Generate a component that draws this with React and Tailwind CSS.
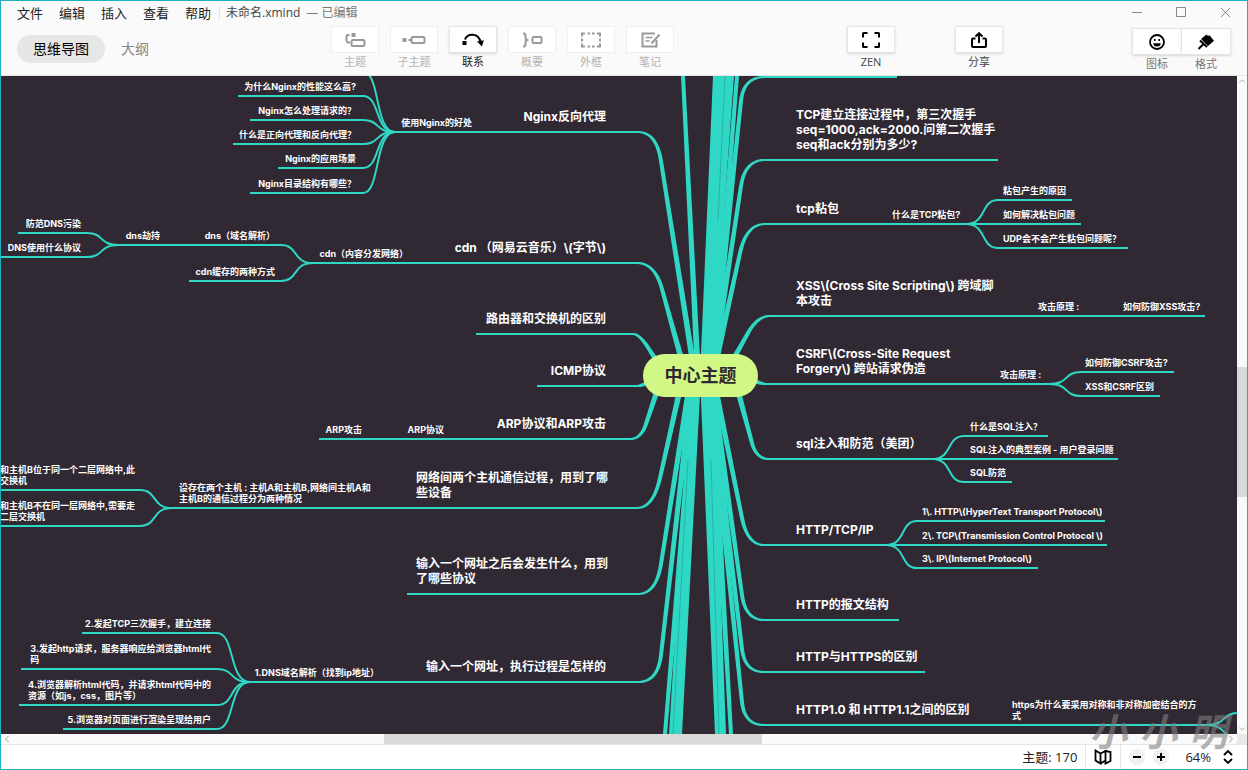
import { ChevronDown, ChevronLeft, ChevronRight, ChevronUp } from "lucide-react";

const TEAL = "#2fd8c5";

// scroll position of the canvas inside the map
const VIEW = { x: 1, y: 76 };
const CENTER_Y = 376;

// from: start x on the centre line, knee: where the line bends, flat: where it turns level
const branches = [
  { from: 695, knee: [661, 161], flat: 638, y: 132, end: 393 },
  { from: 686, knee: [662, 289], flat: 637, y: 263, end: 311 },
  { from: 666, knee: [649, 349], flat: 633, y: 334, end: 476 },
  { from: 664, knee: [645, 384], flat: 637, y: 386, end: 537 },
  { from: 662, knee: [646, 424], flat: 630, y: 439, end: 319 },
  { from: 683, knee: [660, 478], flat: 637, y: 508, end: 170 },
  { from: 691, knee: [661, 564], flat: 638, y: 594, end: 407 },
  { from: 693, knee: [661, 655], flat: 638, y: 682, end: 249 },
  { from: 712, knee: [741, 101], flat: 765, y: 77, end: 897 },
  { from: 712, knee: [741, 186], flat: 765, y: 160, end: 998 },
  { from: 713, knee: [740, 253], flat: 765, y: 224, end: 1081 },
  { from: 724, knee: [748, 333], flat: 770, y: 316, end: 1205 },
  { from: 738, knee: [757, 382], flat: 766, y: 384, end: 1049 },
  { from: 734, knee: [752, 443], flat: 769, y: 459, end: 1118 },
  { from: 713, knee: [742, 518], flat: 764, y: 545, end: 1107 },
  { from: 711, knee: [742, 595], flat: 764, y: 620, end: 899 },
  { from: 709, knee: [742, 649], flat: 764, y: 672, end: 925 },
  { from: 708, knee: [742, 702], flat: 764, y: 725, end: 1210 },
];

// branches that run to topics outside the window
const bundles = [
  "681,76 685,76 701,376 695,376",
  "713,76 734,76 712,376 700,376",
  "735,76 739,76 716,376 710,376",
  "663,734 667,734 698,376 692,376",
  "669,734 682,734 701,376 691,376",
  "715,734 726,734 713,376 700,376",
  "729,734 733,734 714,376 707,376",
];

const forks = [
  { x: 395, y: 132, to: 363, ys: [72, 96, 120, 144, 168, 193] },
  { x: 313, y: 263, to: 281, ys: [245, 281] },
  { x: 119, y: 245, to: 87, ys: [233, 257] },
  { x: 172, y: 508, to: 140, ys: [490, 526] },
  { x: 250, y: 682, to: 217, ys: [633, 669, 705, 729] },
  { x: 966, y: 224, to: 998, ys: [200, 248] },
  { x: 1049, y: 384, to: 1081, ys: [372, 396] },
  { x: 932, y: 459, to: 964, ys: [436, 482] },
  { x: 886, y: 545, to: 917, ys: [521, 568] },
  { x: 1206, y: 725, to: 1239, ys: [713, 738] },
];

// [x1, x2, y]
const rules = [
  [238, 363, 96],
  [250, 363, 120],
  [233, 363, 144],
  [278, 363, 168],
  [250, 363, 193],
  [115, 281, 245],
  [189, 281, 281],
  [18, 87, 233],
  [0, 87, 257],
  [0, 140, 490],
  [0, 140, 526],
  [82, 217, 633],
  [21, 217, 669],
  [19, 217, 705],
  [63, 217, 729],
  [998, 1072, 200],
  [998, 1128, 248],
  [1081, 1174, 372],
  [1081, 1160, 396],
  [964, 1048, 436],
  [964, 1012, 482],
  [917, 1105, 521],
  [917, 1038, 568],
];

// x is the left edge of the text, or the right edge when side is "left"
const mainTopics = [
  { side: "left", x: 606, y: 132, lines: ["Nginx反向代理"] },
  { side: "left", x: 606, y: 263, lines: ["cdn （网易云音乐）\\(字节\\)"] },
  { side: "left", x: 606, y: 334, lines: ["路由器和交换机的区别"] },
  { side: "left", x: 606, y: 386, lines: ["ICMP协议"] },
  { side: "left", x: 606, y: 439, lines: ["ARP协议和ARP攻击"] },
  { side: "left", x: 608, y: 508, lines: ["网络间两个主机通信过程，用到了哪", "些设备"] },
  { side: "left", x: 608, y: 594, lines: ["输入一个网址之后会发生什么，用到", "了哪些协议"] },
  { side: "left", x: 606, y: 682, lines: ["输入一个网址，执行过程是怎样的"] },
  { x: 796, y: 160, lines: ["TCP建立连接过程中，第三次握手", "seq=1000,ack=2000.问第二次握手", "seq和ack分别为多少?"] },
  { x: 796, y: 224, lines: ["tcp粘包"] },
  { x: 796, y: 316, lines: ["XSS\\(Cross Site Scripting\\) 跨域脚", "本攻击"] },
  { x: 796, y: 384, lines: ["CSRF\\(Cross-Site Request", "Forgery\\) 跨站请求伪造"] },
  { x: 796, y: 459, lines: ["sql注入和防范（美团）"] },
  { x: 796, y: 545, lines: ["HTTP/TCP/IP"] },
  { x: 796, y: 620, lines: ["HTTP的报文结构"] },
  { x: 796, y: 672, lines: ["HTTP与HTTPS的区别"] },
  { x: 796, y: 725, lines: ["HTTP1.0 和 HTTP1.1之间的区别"] },
];

const subTopics = [
  { side: "left", x: 472, y: 132, lines: ["使用Nginx的好处"] },
  { side: "left", x: 356, y: 96, lines: ["为什么Nginx的性能这么高?"] },
  { side: "left", x: 356, y: 120, lines: ["Nginx怎么处理请求的？"] },
  { side: "left", x: 356, y: 144, lines: ["什么是正向代理和反向代理？"] },
  { side: "left", x: 356, y: 168, lines: ["Nginx的应用场景"] },
  { side: "left", x: 356, y: 193, lines: ["Nginx目录结构有哪些？"] },
  { side: "left", x: 408, y: 263, lines: ["cdn（内容分发网络）"] },
  { side: "left", x: 275, y: 245, lines: ["dns（域名解析）"] },
  { side: "left", x: 275, y: 281, lines: ["cdn缓存的两种方式"] },
  { side: "left", x: 160, y: 245, lines: ["dns劫持"] },
  { side: "left", x: 81, y: 233, lines: ["防范DNS污染"] },
  { side: "left", x: 81, y: 257, lines: ["DNS使用什么协议"] },
  { side: "left", x: 444, y: 439, lines: ["ARP协议"] },
  { side: "left", x: 362, y: 439, lines: ["ARP攻击"] },
  { x: 179, y: 508, lines: ["设存在两个主机 : 主机A和主机B,网络间主机A和", "主机B的通信过程分为两种情况"] },
  { x: 0, y: 490, lines: ["和主机B位于同一个二层网络中,此", "交换机"] },
  { x: 0, y: 526, lines: ["和主机B不在同一层网络中,需要走", "二层交换机"] },
  { side: "left", x: 379, y: 682, lines: ["1.DNS域名解析（找到ip地址）"] },
  { side: "left", x: 211, y: 633, lines: ["2.发起TCP三次握手，建立连接"] },
  { side: "left", x: 211, y: 669, lines: ["3.发起http请求，服务器响应给浏览器html代", "码"] },
  { side: "left", x: 211, y: 705, lines: ["4.浏览器解析html代码，并请求html代码中的", "资源（如js，css，图片等）"] },
  { side: "left", x: 211, y: 729, lines: ["5.浏览器对页面进行渲染呈现给用户"] },
  { x: 892, y: 224, lines: ["什么是TCP粘包?"] },
  { x: 1003, y: 200, lines: ["粘包产生的原因"] },
  { x: 1003, y: 224, lines: ["如何解决粘包问题"] },
  { x: 1003, y: 248, lines: ["UDP会不会产生粘包问题呢？"] },
  { x: 1038, y: 316, lines: ["攻击原理 :"] },
  { x: 1123, y: 316, lines: ["如何防御XSS攻击?"] },
  { x: 1000, y: 384, lines: ["攻击原理 :"] },
  { x: 1085, y: 372, lines: ["如何防御CSRF攻击?"] },
  { x: 1085, y: 396, lines: ["XSS和CSRF区别"] },
  { x: 970, y: 436, lines: ["什么是SQL注入？"] },
  { x: 970, y: 459, lines: ["SQL注入的典型案例 - 用户登录问题"] },
  { x: 970, y: 482, lines: ["SQL防范"] },
  { x: 922, y: 521, lines: ["1\\. HTTP\\(HyperText Transport Protocol\\)"] },
  { x: 922, y: 545, lines: ["2\\. TCP\\(Transmission Control Protocol \\)"] },
  { x: 922, y: 568, lines: ["3\\. IP\\(Internet Protocol\\)"] },
  { x: 1012, y: 725, lines: ["https为什么要采用对称和非对称加密结合的方", "式"] },
];

// outline of a branch that gets thinner on its way out
function branchShape({ from, knee, flat, y }) {
  const [kx, ky] = knee;
  const dx = kx - from;
  const dy = ky - CENTER_Y;
  // the straight part, prolonged to the level of the topic
  let cx = dy === 0 ? kx : kx + (dx * (y - ky)) / dy;
  if ((cx - kx) / (flat - kx) > 0.8) cx = (kx + flat) / 2;
  const points = [];
  for (let i = 0; i <= 4; i++) {
    points.push([from + (dx * i) / 4, CENTER_Y + (dy * i) / 4, 3 - i * 0.25]);
  }
  for (let i = 1; i <= 12; i++) {
    const t = i / 12;
    const u = 1 - t;
    points.push([
      u * u * kx + 2 * u * t * cx + t * t * flat,
      u * u * ky + 2 * u * t * y + t * t * y,
      2 - t,
    ]);
  }
  const a = [];
  const b = [];
  points.forEach(([px, py, w], i) => {
    const p = points[Math.max(i - 1, 0)];
    const n = points[Math.min(i + 1, points.length - 1)];
    const len = Math.hypot(n[0] - p[0], n[1] - p[1]) || 1;
    const ox = (-(n[1] - p[1]) / len) * w;
    const oy = ((n[0] - p[0]) / len) * w;
    a.push(`${px + ox},${py + oy}`);
    b.unshift(`${px - ox},${py - oy}`);
  });
  return a.concat(b).join(" ");
}

function Lines() {
  return (
    <svg className="absolute inset-0 h-full w-full" aria-hidden="true">
      <g transform={`translate(${-VIEW.x} ${-VIEW.y})`} fill="none" stroke={TEAL} strokeWidth="2">
        {bundles.map((points) => (
          <polygon key={points} points={points} fill={TEAL} stroke="none" />
        ))}
        <g stroke="#1f8f87" strokeWidth="0.5">
          <path d="M725 76 718 220M673 734 688 460M719 734 711 460" />
        </g>
        {branches.map((b) => (
          <g key={`${b.end}-${b.y}`}>
            <polygon points={branchShape(b)} fill={TEAL} stroke="none" />
            <path d={`M${b.flat} ${b.y}H${b.end}`} />
          </g>
        ))}
        {forks.map((f) =>
          f.ys.map((y) => {
            const w = f.to - f.x;
            return (
              <path
                key={`${f.x}-${y}`}
                d={`M${f.x} ${f.y}C${f.x + w * 0.65} ${f.y} ${f.x + w * 0.45} ${y} ${f.to} ${y}`}
              />
            );
          })
        )}
        {rules.map(([x1, x2, y]) => (
          <path key={`${x1}-${y}`} d={`M${x1} ${y}H${x2}`} />
        ))}
      </g>
    </svg>
  );
}

function Topic({ topic, main }) {
  const left = topic.side === "left";
  const leading = main ? 15 : 11;
  const gap = main ? 8 : 4;
  const style = {
    left: topic.x - VIEW.x - (left ? 300 : 0),
    top: topic.y - VIEW.y - gap - leading * topic.lines.length,
  };
  return (
    <div className={`absolute flex w-[300px] ${left ? "justify-end" : "justify-start"}`} style={style}>
      <p
        className={`whitespace-nowrap font-bold text-white ${
          main ? "text-[12px] leading-[15px]" : "text-[9px] leading-[11px]"
        }`}
      >
        {topic.lines.map((line) => (
          <span key={line} className="block">
            {line}
          </span>
        ))}
      </p>
    </div>
  );
}

const icons = {
  topic: (
    <g fill="none" stroke="currentColor" strokeWidth="2">
      <path d="M6.5 3H5Q3.500 3 3.500 4.500V8.500Q3.500 10 5 10.500H7" />
      <rect x="8.500" y="8" width="13" height="6" rx="1.500" />
      <path d="M8.500 3h4" strokeWidth="4" />
    </g>
  ),
  subtopic: (
    <g fill="none" stroke="currentColor" strokeWidth="2">
      <path d="M.5 8h4" strokeWidth="4" />
      <path d="M6.500 8h3" />
      <rect x="9.500" y="5" width="13" height="6" rx="1.500" />
    </g>
  ),
  relation: (
    <g fill="none" stroke="currentColor" strokeWidth="2">
      <path d="M1.500 11h4" strokeWidth="4" />
      <path d="M4 7.500C6.500.8 17.500.5 19.500 10" />
      <path d="M16 9.500 22.800 8.300 21 14.500z" fill="currentColor" stroke="none" />
    </g>
  ),
  summary: (
    <g fill="none" stroke="currentColor" strokeWidth="2">
      <path d="M3 1.500h1Q5.500 1.500 5.500 3.500V6Q5.500 8 8.500 8 5.500 8 5.500 10V12.500Q5.500 14.500 4 14.500H3" />
      <rect x="12.500" y="5" width="9" height="6" rx="1" />
    </g>
  ),
  boundary: (
    <g fill="none" stroke="currentColor" strokeWidth="2">
      <path d="M3 4.500V1.500H6M18 1.500h3V4.500M21 11.500v3H18M6 14.500H3v-3" />
      <path d="M8.500 1.500h2.500M13 1.500h2.500M8.500 14.500h2.500M13 14.500h2.500M3 6.500v3M21 6.500v3" />
    </g>
  ),
  note: (
    <g fill="none" stroke="currentColor" strokeWidth="2">
      <path d="M17 1.500H4.500v13h14V8" />
      <path d="M7.500 5.500h7M7.500 9h4" strokeWidth="1.500" />
      <path d="M21.500 2.500 13.500 11.500" />
    </g>
  ),
  zen: (
    <g fill="none" stroke="currentColor" strokeWidth="2">
      <path d="M4 5.500V1.500Q4 1 4.500 1H8.500M15.500 1h4Q20 1 20 1.500V5.500M20 10.500v4Q20 15 19.500 15H15.500M8.500 15H4.500Q4 15 4 14.500v-4" />
    </g>
  ),
  share: (
    <g fill="none" stroke="currentColor" strokeWidth="2">
      <path d="M8.500 6.500H6Q5 6.500 5 7.500V14Q5 15 6 15H18Q19 15 19 14V7.500Q19 6.500 18 6.500H15.500" />
      <path d="M12 11V1.200M8.500 4.500 12 1.200 15.500 4.500" />
    </g>
  ),
  smile: (
    <g>
      <circle cx="12" cy="8" r="7" fill="none" stroke="currentColor" strokeWidth="1.800" />
      <path d="M9 5h1.600v2H9zM13.400 5H15v2h-1.600zM8.300 9.200h7.400a3.700 3.300 0 0 1-7.400 0z" fill="currentColor" />
    </g>
  ),
  brush: (
    <g>
      <path d="M12.500.5 14 2 15.500 1.200 20 6.800 14 12 7 5z" fill="currentColor" />
      <path d="M6 6.500 13 13M9 10.500 4.500 15" fill="none" stroke="currentColor" strokeWidth="2" />
    </g>
  ),
};

function Icon({ name }) {
  return (
    <svg width="24" height="16" viewBox="0 0 24 16" aria-hidden="true">
      {icons[name]}
    </svg>
  );
}

function Tool({ icon, label, disabled, strong }) {
  const tone = disabled ? "text-[#999999]" : "text-black";
  const caption = disabled ? "text-[#b4b4b4]" : strong ? "text-[#222222]" : "text-[#444444]";
  return (
    <button type="button" disabled={disabled} className="flex w-12 flex-col items-center gap-px">
      <span
        className={`flex h-[27px] w-12 items-center justify-center border bg-white ${tone} ${
          disabled ? "border-[#f0f0f0]" : "border-[#e4e4e4] shadow-sm"
        }`}
      >
        <Icon name={icon} />
      </span>
      <span className={`whitespace-nowrap text-[11px] leading-4 ${caption}`}>{label}</span>
    </button>
  );
}

const tools = [
  { icon: "topic", label: "主题", disabled: true },
  { icon: "subtopic", label: "子主题", disabled: true },
  { icon: "relation", label: "联系", strong: true },
  { icon: "summary", label: "概要", disabled: true },
  { icon: "boundary", label: "外框", disabled: true },
  { icon: "note", label: "笔记", disabled: true },
];

function Header() {
  return (
    <header className="h-[75px] shrink-0 border-b border-[#e6e6e6] bg-[#fafafa]">
      <div className="flex h-[23px] items-center pl-4 pr-4">
        <nav className="flex gap-4 text-[13px] leading-5 text-[#222222]">
          {["文件", "编辑", "插入", "查看", "帮助"].map((item) => (
            <button key={item} type="button">
              {item}
            </button>
          ))}
        </nav>
        <div className="ml-2 h-3.5 w-px bg-[#e2e2e2]" />
        <h1 className="ml-1.5 text-[12px] leading-5 text-[#444444]">未命名.xmind</h1>
        <span className="ml-1.5 text-[12px] leading-5 text-[#777777]">— 已编辑</span>
        <div className="ml-auto flex gap-[33px] text-[#888888]">
          <button type="button" aria-label="最小化">
            <svg width="11" height="11" fill="none" stroke="currentColor"><path d="M0 5.500h10" /></svg>
          </button>
          <button type="button" aria-label="最大化">
            <svg width="11" height="11" fill="none" stroke="currentColor"><path d="M.5.5h9v9h-9z" /></svg>
          </button>
          <button type="button" aria-label="关闭">
            <svg width="11" height="11" fill="none" stroke="currentColor"><path d="M1 1l9 9M10 1l-9 9" /></svg>
          </button>
        </div>
      </div>
      <div className="flex items-start px-4 pt-0.5">
        <div className="mt-[9px] flex items-center gap-4 text-[14px] leading-5">
          <button type="button" className="h-7 rounded-full bg-[#e6e6e6] px-4 text-black">
            思维导图
          </button>
          <button type="button" className="text-[#888888]">
            大纲
          </button>
        </div>
        <div className="ml-[182px] flex gap-[11px]">
          {tools.map((tool) => (
            <Tool key={tool.icon} {...tool} />
          ))}
        </div>
        <div className="ml-[173px] flex gap-[60px]">
          <Tool icon="zen" label="ZEN" />
          <Tool icon="share" label="分享" />
        </div>
        <div className="ml-auto mt-0.5 flex">
          {[
            ["smile", "图标"],
            ["brush", "格式"],
          ].map(([icon, label]) => (
            <button key={icon} type="button" className="flex w-[50px] flex-col items-center gap-px first:-mr-px">
              <span className="flex h-[27px] w-full items-center justify-center border border-[#e4e4e4] bg-white text-black shadow-sm">
                <Icon name={icon} />
              </span>
              <span className="text-[11px] leading-4 text-[#777777]">{label}</span>
            </button>
          ))}
        </div>
      </div>
    </header>
  );
}

function Canvas() {
  return (
    <main className="relative min-w-0 flex-1 overflow-hidden bg-[#302832]">
      <Lines />
      {mainTopics.map((topic) => (
        <Topic key={`${topic.x}-${topic.y}`} topic={topic} main />
      ))}
      {subTopics.map((topic) => (
        <Topic key={`${topic.x}-${topic.y}`} topic={topic} />
      ))}
      <h2 className="absolute left-[642px] top-[278px] flex h-[43px] w-[115px] items-center justify-center rounded-full bg-[#d1f784] text-[18px] font-bold leading-6 text-[#302832]">
        中心主题
      </h2>
    </main>
  );
}

function StatusBar() {
  return (
    <footer className="flex h-[25px] shrink-0 items-center justify-end border-t border-[#e6e6e6] bg-white pr-3.5 text-[13px] leading-5 text-[#222222]">
      <span className="pr-2">主题: 170</span>
      <button type="button" aria-label="导航图" className="flex h-full w-9 items-center justify-center border-x border-[#e6e6e6] text-black">
        <svg width="18" height="16" fill="none" stroke="currentColor" strokeWidth="1.800" aria-hidden="true">
          <path d="M1.500 1.500 6.500 4.500V14.500L1.500 11.500zM6.500 4.500 11.500 2V11.500L6.500 14.500M11.500 2 16.500 3V12L11.500 14.500z" />
        </svg>
      </button>
      <button type="button" aria-label="缩小" className="ml-2 flex size-4 items-center justify-center rounded-full bg-[#f0f0f0] text-black">
        <svg width="10" height="10" stroke="currentColor" strokeWidth="2"><path d="M1 5h8" /></svg>
      </button>
      <button type="button" aria-label="放大" className="ml-2 flex size-4 items-center justify-center rounded-full bg-[#f0f0f0] text-black">
        <svg width="10" height="10" stroke="currentColor" strokeWidth="2"><path d="M1 5h8M5 1v8" /></svg>
      </button>
      <span className="ml-4">64%</span>
      <button type="button" aria-label="缩放比例" className="ml-3 text-black">
        <svg width="10" height="14" fill="none" stroke="currentColor" strokeWidth="1.800"><path d="M1 5l4-4 4 4M1 9l4 4 4-4" /></svg>
      </button>
    </footer>
  );
}

export default function App() {
  return (
    <div className="relative flex h-screen flex-col overflow-hidden border border-[#1fb0bd] bg-white font-['Open_Sans','Noto_Sans_CJK_SC',sans-serif]">
      <Header />
      <div className="flex min-h-0 flex-1 font-['Inter','Noto_Sans_CJK_SC',sans-serif]">
        <Canvas />
        <div className="flex w-2.5 shrink-0 flex-col items-center bg-[#fafafa] text-[#a0a0a0]">
          <ChevronUp size={10} />
          <div className="grow-[281]" />
          <div className="w-full grow-[130] bg-[#d9d9d9]" />
          <div className="grow-[227]" />
          <ChevronDown size={10} />
        </div>
      </div>
      <div className="flex h-2.5 shrink-0 items-center bg-[#fafafa] text-[#a0a0a0]">
        <ChevronLeft size={12} />
        <div className="grow-[371]" />
        <div className="h-full grow-[378] bg-[#d9d9d9]" />
        <div className="grow-[463]" />
        <ChevronRight size={12} />
        <div className="h-full w-2.5 bg-[#e8e8e8]" />
      </div>
      <StatusBar />
      <div className="pointer-events-none absolute bottom-6 right-5 flex gap-3 font-['Noto_Sans_CJK_SC',sans-serif] text-[38px] font-bold italic leading-[30px] text-[#808080]/60">
        <span>小</span>
        <span>小</span>
        <span>明</span>
      </div>
    </div>
  );
}
